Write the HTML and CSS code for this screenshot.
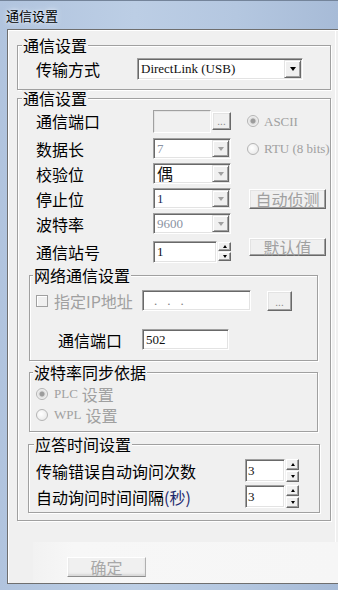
FILE: index.html
```html
<!DOCTYPE html>
<html lang="zh-CN">
<head>
    <meta charset="UTF-8">
    <title>通信设置</title>
    <link rel="stylesheet" href="styles.css">
</head>
<body>
    <div class="window">
        <div class="titlebar"><span class="title">通信设置</span></div>
        <div class="frame">
            <div class="client">
                <fieldset class="group g-top">
                    <legend>通信设置</legend>
                    <div class="line">
                        <span class="lbl">传输方式</span>
                        <div class="combo wide">
                            <span class="val">DirectLink (USB)</span>
                            <span class="drop"><i class="arrow"></i></span>
                        </div>
                    </div>
                </fieldset>

                <fieldset class="group g-main">
                    <legend>通信设置</legend>
                    <div class="grid">
                        <span class="lbl">通信端口</span>
                        <div class="pick">
                            <span class="field off port"></span>
                            <span class="btn dots">...</span>
                        </div>
                        <div class="radio on"><i></i>ASCII</div>

                        <span class="lbl">数据长</span>
                        <div class="combo off">
                            <span class="val grey">7</span>
                            <span class="drop"><i class="arrow"></i></span>
                        </div>
                        <div class="radio"><i></i>RTU (8 bits)</div>

                        <span class="lbl">校验位</span>
                        <div class="combo off">
                            <span class="val cjk">偶</span>
                            <span class="drop"><i class="arrow"></i></span>
                        </div>
                        <span></span>

                        <span class="lbl">停止位</span>
                        <div class="combo off">
                            <span class="val navy">1</span>
                            <span class="drop"><i class="arrow"></i></span>
                        </div>
                        <span class="btn act detect">自动侦测</span>

                        <span class="lbl">波特率</span>
                        <div class="combo off">
                            <span class="val grey">9600</span>
                            <span class="drop"><i class="arrow"></i></span>
                        </div>
                        <span></span>

                        <span class="lbl">通信站号</span>
                        <div class="pick">
                            <span class="field station">1</span>
                            <span class="spin short"><span><i class="up"></i></span><span><i class="down"></i></span></span>
                        </div>
                        <span class="btn act reset">默认值</span>
                    </div>

                    <fieldset class="group g-net">
                        <legend>网络通信设置</legend>
                        <div class="net-row">
                            <div class="check"><i></i><span>指定IP地址</span></div>
                            <span class="field ip"><b>.</b><b>.</b><b>.</b></span>
                            <span class="btn dots wide-dots">...</span>
                        </div>
                        <div class="net-port">
                            <span class="lbl">通信端口</span>
                            <span class="field tcp">502</span>
                        </div>
                    </fieldset>

                    <fieldset class="group g-sync">
                        <legend>波特率同步依据</legend>
                        <div class="radio-row first"><div class="radio cjk-radio on"><i></i><span class="lat">PLC</span><span class="zh">设置</span></div></div>
                        <div class="radio-row"><div class="radio cjk-radio"><i></i><span class="lat">WPL</span><span class="zh">设置</span></div></div>
                    </fieldset>

                    <fieldset class="group g-answer">
                        <legend>应答时间设置</legend>
                        <div class="ans-row first">
                            <span class="lbl">传输错误自动询问次数</span>
                            <span class="field num">3</span>
                            <span class="spin"><span><i class="up"></i></span><span><i class="down"></i></span></span>
                        </div>
                        <div class="ans-row">
                            <span class="lbl">自动询问时间间隔<span class="paren">(秒)</span></span>
                            <span class="field num">3</span>
                            <span class="spin"><span><i class="up"></i></span><span><i class="down"></i></span></span>
                        </div>
                    </fieldset>
                </fieldset>

                <div class="footer">
                    <span class="btn ok">确定</span>
                </div>
            </div>
        </div>
    </div>
</body>
</html>
```

FILE: styles.css
```css
html, body {
    margin: 0;
    padding: 0;
    width: 338px;
    height: 590px;
    overflow: hidden;
    font-family: "Noto Sans CJK SC", sans-serif;
    background: #b6c9e1;
}
.window {
    height: 590px;
    box-sizing: border-box;
    display: flex;
    flex-direction: column;
    border-top: 1px solid #74849a;
    background: linear-gradient(90deg, #b1c4de 0%, #bccee5 40%, #b4c7e0 70%, #a7bbd7 100%);
}
.titlebar {
    height: 28px;
    display: flex;
    align-items: center;
    padding-left: 6px;
}
.title {
    font-size: 13px;
    color: #000;
    text-shadow: 0 0 6px #e6eef8, 0 0 3px #e6eef8;
}
.frame {
    flex: 1;
    display: flex;
    padding: 0 4px 6px 7px;
}
.client {
    flex: 1;
    display: flex;
    flex-direction: column;
    background: #f0f0f0;
    border: 1px solid #6f6f6f;
    box-shadow: inset 1px 1px 0 #fff, inset -3px 0 0 #f0f0f0, inset -4px 0 0 #fff;
    padding: 7px 8px 0 9px;
}

/* group boxes */
.group {
    margin: 0;
    padding: 0;
    min-width: 0;
    border: 1px solid #a0a0a0;
    box-shadow: 1px 1px 0 #fff, inset 1px 1px 0 #fff;
}
.group legend {
    margin-left: 4px;
    padding: 0 1px;
    font-size: 16px;
    line-height: 16px;
    color: #000;
    background: #f0f0f0;
}
.lbl {
    font-size: 16px;
    line-height: 18px;
    color: #000;
    white-space: nowrap;
}

.line {
    display: flex;
    align-items: center;
    height: 23px;
    padding-left: 18px;
    margin: 4px 0 9px;
}
.line .lbl {
    width: 101px;
}

.g-main {
    padding-bottom: 7px;
}
.grid {
    display: grid;
    grid-template-columns: 101px 78px auto;
    grid-template-rows: 30px 25px 25px 25px 25px 31px;
    column-gap: 16px;
    align-items: center;
    padding-left: 18px;
}
.pick {
    display: flex;
    align-items: center;
    gap: 1px;
}

/* sunken boxes */
.combo, .field {
    box-sizing: border-box;
    background: #fff;
    border: 1px solid;
    border-color: #a0a0a0 #fff #fff #a0a0a0;
    box-shadow: inset 1px 1px 0 #696969, inset -1px -1px 0 #e3e3e3;
}
.combo {
    display: flex;
    height: 21px;
    width: 78px;
    padding: 1px;
}
.combo.wide {
    width: 166px;
    height: 22px;
}
.val, .field {
    font-family: "Liberation Serif", serif;
    font-size: 13px;
    color: #111;
}
.val {
    flex: 1;
    display: flex;
    align-items: center;
    padding-left: 2px;
}
.val.grey {
    color: #8b93a3;
}
.val.navy {
    color: #1c2a55;
}
.val.cjk {
    font-family: "Noto Sans CJK SC", sans-serif;
    font-size: 16px;
    line-height: 17px;
}
.drop {
    width: 17px;
    box-sizing: border-box;
    background: #f0f0f0;
    border: 1px solid;
    border-color: #e3e3e3 #696969 #696969 #e3e3e3;
    box-shadow: inset 1px 1px 0 #fff, inset -1px -1px 0 #a0a0a0;
    display: flex;
    align-items: center;
    justify-content: center;
}
.arrow {
    width: 0;
    height: 0;
    border-left: 3.5px solid transparent;
    border-right: 3.5px solid transparent;
    border-top: 4px solid #000;
}
.combo.off .arrow {
    border-top-color: #a0a0a0;
}

.field {
    display: flex;
    align-items: center;
    padding-left: 3px;
}
.field.off {
    background: #f0f0f0;
    border-color: #a0a0a0 #fff #fff #a0a0a0;
    box-shadow: inset 1px 1px 0 #e3e3e3;
}
.port {
    width: 58px;
    height: 23px;
}
.station {
    width: 64px;
    height: 22px;
}
.ip {
    width: 109px;
    height: 21px;
    padding-left: 11px;
    gap: 10px;
}
.ip b {
    font-weight: normal;
    color: #808080;
}
.tcp {
    width: 87px;
    height: 21px;
}
.num {
    width: 40px;
    height: 23px;
    padding-left: 2px;
}

/* raised buttons */
.btn {
    box-sizing: border-box;
    display: flex;
    align-items: center;
    justify-content: center;
    background: #f0f0f0;
    border: 1px solid;
    border-color: #fff #696969 #696969 #fff;
    box-shadow: inset -1px -1px 0 #a0a0a0, inset 1px 1px 0 #e3e3e3;
    color: #a0a0a0;
    font-size: 16px;
    line-height: 16px;
}
.dots {
    width: 19px;
    height: 18px;
    font-size: 10px;
    line-height: 10px;
    align-items: flex-end;
    padding-bottom: 3px;
    color: #8a8a8a;
}
.wide-dots {
    width: 25px;
    height: 20px;
    margin-left: 16px;
}
.act {
    width: 77px;
    margin-left: 2px;
}
.detect {
    height: 20px;
}
.reset {
    height: 18px;
    align-self: start;
    margin-top: 2px;
}

.spin {
    width: 13px;
    height: 23px;
    display: flex;
    flex-direction: column;
    gap: 1px;
}
.spin.short {
    height: 19px;
}
.spin span {
    flex: 1;
    box-sizing: border-box;
    display: flex;
    align-items: center;
    justify-content: center;
    background: #f0f0f0;
    border: 1px solid;
    border-color: #fff #696969 #696969 #fff;
    box-shadow: inset -1px -1px 0 #a0a0a0;
}
.up, .down {
    width: 0;
    height: 0;
    border-left: 2.5px solid transparent;
    border-right: 2.5px solid transparent;
}
.up {
    border-bottom: 3px solid #000;
}
.down {
    border-top: 3px solid #000;
}

/* radios and checks */
.radio {
    display: flex;
    align-items: center;
    gap: 5px;
    font-family: "Liberation Serif", "Noto Sans CJK SC", serif;
    font-size: 13px;
    line-height: 15px;
    color: #a0a0a0;
    white-space: nowrap;
}
.radio i {
    width: 12px;
    height: 12px;
    box-sizing: border-box;
    border-radius: 50%;
    border: 1px solid #b4b4b4;
    background: radial-gradient(circle at 40% 40%, #fff 0, #e4e4e4 100%);
}
.radio.on i {
    background: radial-gradient(circle, #9c9c9c 0, #9c9c9c 2px, #dedede 3px, #f4f4f4 5px);
}
.cjk-radio {
    font-family: "Noto Sans CJK SC", sans-serif;
    font-size: 16px;
    line-height: 16px;
    gap: 6px;
}
.lat {
    font-family: "Liberation Serif", serif;
    font-size: 13px;
}
.zh {
    margin-left: -2px;
}

.g-net {
    margin: 0 12px 0 11px;
}
.g-net legend {
    margin-left: 3px;
}
.net-row {
    display: flex;
    align-items: center;
    height: 31px;
    margin-top: 2px;
    padding-left: 6px;
}
.check {
    width: 106px;
    display: flex;
    align-items: center;
    gap: 6px;
    font-size: 16px;
    line-height: 18px;
    color: #a0a0a0;
    white-space: nowrap;
}
.check i {
    width: 12px;
    height: 12px;
    box-sizing: border-box;
    border: 1px solid #a0a0a0;
    background: #f0f0f0;
    box-shadow: inset 1px 1px 0 #fff;
}
.net-port {
    display: flex;
    align-items: center;
    height: 23px;
    margin: 12px 0 9px;
    padding-left: 28px;
}
.net-port .lbl {
    width: 84px;
}

.g-sync {
    margin: 3px 12px 0 11px;
    padding-bottom: 6px;
}
.g-sync legend {
    margin-left: 3px;
}
.radio-row {
    height: 21px;
    display: flex;
    align-items: center;
    padding-left: 6px;
}
.radio-row.first {
    margin-top: 3px;
}

.g-answer {
    margin: 4px 10px 0;
    padding-bottom: 4px;
}
.g-answer legend {
    margin-left: 5px;
}
.ans-row {
    display: flex;
    align-items: center;
    gap: 1px;
    margin-top: 3px;
    padding-left: 7px;
}
.ans-row.first {
    margin-top: 7px;
}
.ans-row .lbl {
    width: 208px;
}
.paren {
    color: #1e2a6e;
}

.footer {
    flex: 1;
    margin: 21px -8px 0 16px;
    padding: 15px 0 0 34px;
    background: linear-gradient(90deg, #f2f2f2 0, #f7f7f7 40px, #f6f6f6 100%);
}
.ok {
    width: 79px;
    height: 20px;
    border-color: #fff #b0b0b0 #8c8c8c #fff;
    box-shadow: inset 0 -2px 2px #d8d8d8;
    color: #a8a8a8;
}
```
